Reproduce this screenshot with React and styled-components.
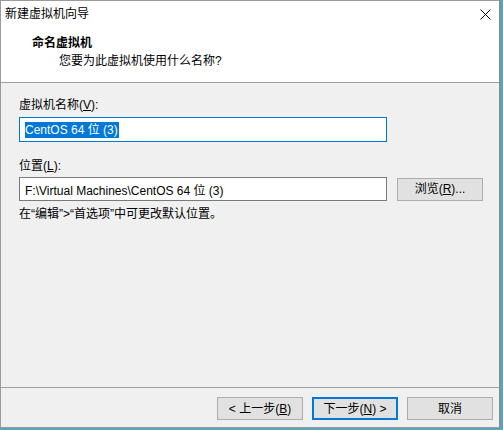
import React from "react";
import styled, { createGlobalStyle } from "styled-components";

const Global = createGlobalStyle`
  html, body { margin: 0; padding: 0; }
  body {
    background: #5aa3b9;
    font-family: "Liberation Sans", "Noto Sans CJK SC", sans-serif;
    font-size: 12px;
    color: #000;
    width: 503px;
    height: 430px;
    overflow: hidden;
  }
  * { box-sizing: border-box; }
`;

const Window = styled.div`
  width: 500px;
  height: 428px;
  border: 1px solid #9b9b9b;
  border-right-color: #8a8a8a;
  background: #f0f0f0;
  display: flex;
  flex-direction: column;
`;

const TitleBar = styled.div`
  height: 29px;
  background: #fff;
  display: flex;
  align-items: center;
  justify-content: space-between;
  padding-left: 4px;
`;

const TitleText = styled.span`
  font-size: 12px;
  line-height: 16px;
  margin-top: -3px;
`;

const CloseBtn = styled.div`
  width: 28px;
  height: 29px;
  display: flex;
  align-items: center;
  justify-content: center;
  margin-top: -3px;
`;

const Header = styled.div`
  background: #fff;
  height: 53px;
  border-bottom: 1px solid #a0a0a0;
  padding: 4px 0 0 31px;
  display: flex;
  flex-direction: column;
`;

const HeaderTitle = styled.div`
  font-weight: bold;
  font-size: 12px;
  line-height: 18px;
`;

const HeaderSub = styled.div`
  padding-left: 27px;
  line-height: 18px;
`;

const Body = styled.div`
  flex: 1;
  padding: 14px 0 0 18px;
  display: flex;
  flex-direction: column;
`;

const Label = styled.div`
  line-height: 16px;
  margin-top: ${(p) => p.$mt || 0}px;
  margin-bottom: ${(p) => p.$mb || 0}px;
`;

const U = styled.span`
  text-decoration: underline;
`;

const Row = styled.div`
  display: flex;
  align-items: center;
  gap: 10px;
`;

const TextBox = styled.div`
  width: 368px;
  height: ${(p) => p.$h}px;
  background: #fff;
  border: 1px solid ${(p) => (p.$focused ? "#0078d7" : "#7a7a7a")};
  display: flex;
  align-items: center;
  padding-left: 5px;
  white-space: nowrap;
`;

const Selected = styled.span`
  background: #0078d7;
  color: #fff;
  line-height: 16px;
  padding-right: 1px;
`;

const Button = styled.div`
  width: 86px;
  height: 23px;
  background: #e1e1e1;
  border: ${(p) => (p.$default ? "2px solid #0078d7" : "1px solid #adadad")};
  display: flex;
  align-items: center;
  justify-content: center;
  line-height: 16px;
`;

const Hint = styled.div`
  line-height: 16px;
  margin-top: 5px;
`;

const Footer = styled.div`
  height: 40px;
  border-top: 1px solid #a0a0a0;
  display: flex;
  justify-content: flex-end;
  align-items: flex-start;
  gap: 9px;
  padding: 9px 6px 0 0;
`;

export default function App() {
  return (
    <>
      <Global />
      <Window>
        <TitleBar>
          <TitleText>新建虚拟机向导</TitleText>
          <CloseBtn>
            <svg width="11" height="11" viewBox="0 0 11 11">
              <path d="M0.5 0.5 L10.5 10.5 M10.5 0.5 L0.5 10.5" stroke="#000" strokeWidth="1" />
            </svg>
          </CloseBtn>
        </TitleBar>
        <Header>
          <HeaderTitle>命名虚拟机</HeaderTitle>
          <HeaderSub>您要为此虚拟机使用什么名称?</HeaderSub>
        </Header>
        <Body>
          <Label $mb={4}>
            虚拟机名称(<U>V</U>):
          </Label>
          <TextBox $focused $h={25}>
            <Selected>CentOS 64 位 (3)</Selected>
          </TextBox>
          <Label $mt={16} $mb={3}>
            位置(<U>L</U>):
          </Label>
          <Row>
            <TextBox $h={24}>F:\Virtual Machines\CentOS 64 位 (3)</TextBox>
            <Button>
              浏览(<U>R</U>)...
            </Button>
          </Row>
          <Hint>在“编辑”&gt;“首选项”中可更改默认位置。</Hint>
        </Body>
        <Footer>
          <Button>
            &lt; 上一步(<U>B</U>)
          </Button>
          <Button $default>
            下一步(<U>N</U>) &gt;
          </Button>
          <Button>取消</Button>
        </Footer>
      </Window>
    </>
  );
}
